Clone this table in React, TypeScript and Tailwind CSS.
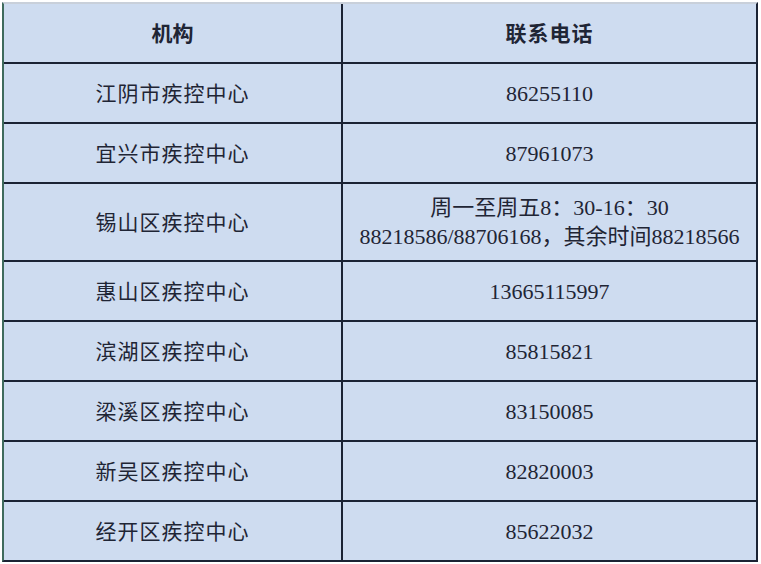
import React from 'react';

interface Row {
  name: string;
  phone: string[];
}

const rows: Row[] = [
  { name: '江阴市疾控中心', phone: ['86255110'] },
  { name: '宜兴市疾控中心', phone: ['87961073'] },
  {
    name: '锡山区疾控中心',
    phone: ['周一至周五8：30-16：30', '88218586/88706168，其余时间88218566'],
  },
  { name: '惠山区疾控中心', phone: ['13665115997'] },
  { name: '滨湖区疾控中心', phone: ['85815821'] },
  { name: '梁溪区疾控中心', phone: ['83150085'] },
  { name: '新吴区疾控中心', phone: ['82820003'] },
  { name: '经开区疾控中心', phone: ['85622032'] },
];

const App: React.FC = () => {
  return (
    <div className="h-[564px] w-[761px] bg-white pt-[2px] pl-[2px]">
      <div className="w-[756px] border-t-2 border-r-2 border-b-2 border-l-2 border-t-[#c9d0da] border-r-[#1b2334] border-b-[#1b2334] border-l-[#3f6b5d] bg-[#cedcf0] text-[#1f2535]">
        {/* header */}
        <div className="flex h-[60px] border-b-2 border-[#1b2334]">
          <div className="flex w-[339px] items-center justify-center border-r-2 border-[#1b2334] font-[family-name:'Noto_Sans_CJK_SC',sans-serif] text-[21px] font-bold">
            机构
          </div>
          <div className="flex flex-1 items-center justify-center font-[family-name:'Noto_Sans_CJK_SC',sans-serif] text-[21px] font-bold tracking-[1px]">
            联系电话
          </div>
        </div>

        {rows.map((row, i) => {
          const tall = row.phone.length > 1;
          const last = i === rows.length - 1;
          return (
            <div
              key={row.name}
              className={
                (tall ? 'h-[78px] ' : last ? 'h-[58px] ' : 'h-[60px] ') +
                'flex ' +
                (last ? '' : 'border-b-2 border-[#1b2334]')
              }
            >
              <div className="flex w-[339px] items-center justify-center border-r-2 border-[#1b2334] font-[family-name:'Noto_Sans_CJK_SC',sans-serif] text-[21px] tracking-[1px]">
                {row.name}
              </div>
              <div className="flex flex-1 flex-col items-center justify-center font-[family-name:'Liberation_Serif','Noto_Sans_CJK_SC',serif] text-[22px] leading-[29px]">
                {row.phone.map((line) => (
                  <span key={line}>{line}</span>
                ))}
              </div>
            </div>
          );
        })}
      </div>
    </div>
  );
};

export default App;
